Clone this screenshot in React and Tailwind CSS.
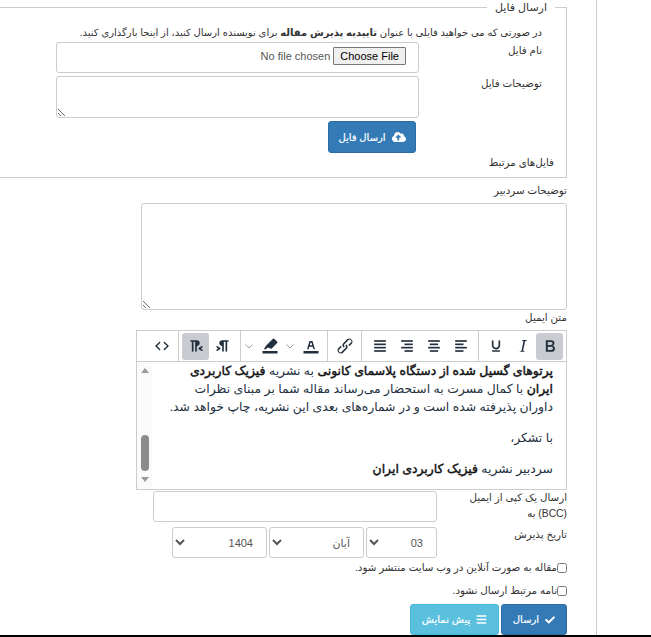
import { FaCloudUploadAlt, FaCheck, FaBars } from 'react-icons/fa';

const labelText = 'text-[10.3px] leading-[14px] text-[#333]';
const boxBorder = 'border border-[#ccc] rounded-[3px] bg-white';
const editorBold = 'font-normal [-webkit-text-stroke:0.45px_#111] text-[#111]';
const buttonText = 'text-white text-[10px] [-webkit-text-stroke:0.2px_#fff]';

function Icon({ d, flip = false, children }) {
  return (
    <svg width="20" height="20" viewBox="0 0 24 24" fill="#222f3e" className={flip ? '-scale-x-100' : ''}>
      {d && <path d={d} />}
      {children}
    </svg>
  );
}

function ToolButton({ active = false, width = 'w-[27px]', children }) {
  return (
    <div className={`${width} h-[27px] flex items-center justify-center rounded-[3px] ${active ? 'bg-[#c8cbcf]' : ''}`}>
      {children}
    </div>
  );
}

function Chevron() {
  return (
    <svg width="10" height="10" viewBox="0 0 10 10" fill="none" stroke="#9aa1a9" strokeWidth="1">
      <path d="M1.5 3.5 5 7l3.5-3.5" />
    </svg>
  );
}

function AlignIcon({ rows }) {
  return (
    <Icon>
      {rows.map(([x, y, w]) => (
        <rect key={y} x={x} y={y} width={w} height="2" />
      ))}
    </Icon>
  );
}

const pilcrow =
  'M11 5h7a1 1 0 0 1 0 2h-1v11a1 1 0 0 1-2 0V7h-2v11a1 1 0 0 1-2 0v-6c-.5 0-1 0-1.4-.3A3.4 3.4 0 0 1 7.8 10a3.3 3.3 0 0 1 0-2.8 3.4 3.4 0 0 1 1.8-1.8L11 5zM4.4 16.2L6.2 15l-1.8-1.2a1 1 0 0 1 1.2-1.6l3 2a1 1 0 0 1 0 1.6l-3 2a1 1 0 1 1-1.2-1.6z';

function Toolbar() {
  return (
    <div className="flex items-center h-[31px] border-b border-[#ccc]">
      <div className="flex h-full items-center px-[3px] border-l border-[#ccc]">
        <ToolButton active>
          <Icon d="M7.8 19c-.3 0-.5 0-.6-.2l-.2-.5V5.7c0-.2 0-.4.2-.5l.6-.2h5c1.5 0 2.7.3 3.5 1 .7.6 1.1 1.4 1.1 2.5a3 3 0 0 1-.6 1.9c-.4.6-1 1-1.6 1.2.4.1.9.3 1.3.6s.8.7 1 1.2c.4.4.5 1 .5 1.6 0 1.3-.4 2.3-1.3 3-.8.7-2.1 1-3.8 1H7.8zm5-8.3c.6 0 1.2-.1 1.6-.5.4-.3.6-.7.6-1.3 0-1.1-.8-1.7-2.3-1.7H9.3v3.5h3.4zm.5 6c.7 0 1.3-.1 1.7-.4.4-.4.6-.9.6-1.5s-.2-1-.7-1.4c-.4-.3-1-.4-2-.4H9.4v3.8h4z" />
        </ToolButton>
        <ToolButton>
          <Icon d="M16.7 4.7l-.1.9h-.3c-.6 0-1 0-1.4.3-.3.3-.4.6-.5 1.1l-2.1 9.8v.6c0 .5.4.8 1.4.8h.2l-.2.8H8l.2-.8h.2c1.1 0 1.8-.5 2-1.5l2-9.8.1-.5c0-.6-.4-.8-1.4-.8h-.3l.2-.9h5.8z" />
        </ToolButton>
        <ToolButton>
          <Icon d="M16 5c.6 0 1 .4 1 1v5.5a4 4 0 0 1-.4 1.8l-1 1.4a5.3 5.3 0 0 1-5.5 1 5 5 0 0 1-1.6-1c-.5-.4-.8-.9-1.1-1.4a4 4 0 0 1-.4-1.8V6c0-.6.4-1 1-1s1 .4 1 1v5.5c0 .3 0 .6.2 1l.6.7a3.3 3.3 0 0 0 2.2.8 3.4 3.4 0 0 0 2.2-.8c.3-.2.4-.5.6-.8l.2-.9V6c0-.6.4-1 1-1zM8 17h8c.6 0 1 .4 1 1s-.4 1-1 1H8a1 1 0 0 1 0-2z" />
        </ToolButton>
      </div>
      <div className="flex h-full items-center px-1 border-l border-[#ccc]">
        <ToolButton>
          <AlignIcon rows={[[5, 5, 14], [5, 9, 10], [5, 13, 14], [5, 17, 10]]} />
        </ToolButton>
        <ToolButton>
          <AlignIcon rows={[[5, 5, 14], [7, 9, 10], [5, 13, 14], [7, 17, 10]]} />
        </ToolButton>
        <ToolButton>
          <AlignIcon rows={[[5, 5, 14], [9, 9, 10], [5, 13, 14], [9, 17, 10]]} />
        </ToolButton>
        <ToolButton>
          <AlignIcon rows={[[5, 5, 14], [5, 9, 14], [5, 13, 14], [5, 17, 14]]} />
        </ToolButton>
      </div>
      <div className="flex h-full items-center px-[3px] border-l border-[#ccc]">
        <ToolButton>
          <Icon d="M6.2 12.3a1 1 0 0 1 1.4 1.4l-2.1 2a2 2 0 1 0 2.7 2.8l4.8-4.8a1 1 0 0 0 0-1.4 1 1 0 1 1 1.4-1.3 2.9 2.9 0 0 1 0 4L9.6 20a3.9 3.9 0 0 1-5.5-5.5l2-2zm11.6-.6a1 1 0 0 1-1.4-1.4l2-2a2 2 0 1 0-2.6-2.8L11 10.3a1 1 0 0 0 0 1.4A1 1 0 1 1 9.6 13a2.9 2.9 0 0 1 0-4L14.4 4a3.9 3.9 0 0 1 5.5 5.5l-2 2z" />
        </ToolButton>
      </div>
      <div className="flex h-full items-center pr-[3px] pl-px border-l border-[#ccc]">
        <ToolButton>
          <Icon d="M3 18h18v3H3zM8.7 16h-.8a.5.5 0 0 1-.5-.6l2.7-9c.1-.3.3-.4.5-.4h2.8c.2 0 .4.1.5.4l2.7 9a.5.5 0 0 1-.5.6h-.8a.5.5 0 0 1-.4-.4l-.7-2.2c0-.3-.3-.4-.5-.4h-3.4c-.2 0-.4.1-.5.4l-.7 2.2c0 .3-.2.4-.4.4zm2.6-7.6l-.6 2a.5.5 0 0 0 .5.6h1.6a.5.5 0 0 0 .5-.6l-.6-2c0-.3-.3-.4-.5-.4h-.4c-.2 0-.4.1-.5.4z" />
        </ToolButton>
        <ToolButton width="w-[14px]">
          <Chevron />
        </ToolButton>
        <ToolButton>
          <Icon d="M3 18h18v3H3zM17 3.4l3.6 3.6a1 1 0 0 1 0 1.4l-6.8 6.8-5-1.4-1.4 2.2H4.6l2.8-4.6 8.2-8a1 1 0 0 1 1.4 0z" />
        </ToolButton>
        <ToolButton width="w-[14px]">
          <Chevron />
        </ToolButton>
      </div>
      <div className="flex h-full items-center pr-1 pl-[3px] border-l border-[#ccc]">
        <ToolButton>
          <Icon d={pilcrow} />
        </ToolButton>
        <ToolButton active>
          <Icon d={pilcrow} flip />
        </ToolButton>
      </div>
      <div className="flex h-full items-center pr-[3px]">
        <ToolButton>
          <Icon d="M9.8 15.7c.3.3.3.8 0 1-.3.4-.9.4-1.2 0l-4.4-4.1a.8.8 0 0 1 0-1.2l4.4-4.2c.3-.3.9-.3 1.2 0 .3.3.3.8 0 1.1L6 12l3.8 3.7zm4.4 0L18 12l-3.8-3.7a.8.8 0 0 1 0-1.1c.3-.3.9-.3 1.2 0l4.4 4.2c.3.3.3.9 0 1.2l-4.4 4.1c-.3.4-.9.4-1.2 0a.7.7 0 0 1 0-1z" />
        </ToolButton>
      </div>
    </div>
  );
}

function EditorBody() {
  return (
    <div className="flex h-[127px] overflow-hidden">
      <div className="flex-1 min-w-0 pr-[13px] text-[12.4px] leading-[18px] text-[#222f3e] whitespace-nowrap">
        <p>
          <b className={editorBold}>پرتوهای گسیل شده از دستگاه پلاسمای کانونی</b> به نشریه{' '}
          <b className={editorBold}>فیزیک کاربردی</b>
        </p>
        <p>
          <b className={editorBold}>ایران</b> با کمال مسرت به استحضار می‌رساند مقاله شما بر مبنای نظرات
        </p>
        <p>داوران پذیرفته شده است و در شماره‌های بعدی این نشریه، چاپ خواهد شد.</p>
        <p className="mt-[13px]">با تشکر،</p>
        <p className="mt-[13px]">
          سردبیر نشریه <b className={editorBold}>فیزیک کاربردی ایران</b>
        </p>
      </div>
      <div className="w-[15px] flex flex-col items-center bg-[#fafafa] pt-[6px] pb-[7px]">
        <div className="w-0 h-0 border-x-[4px] border-x-transparent border-b-[5px] border-b-[#9a9a9a]" />
        <div className="flex-1" />
        <div className="w-[8px] h-[36px] rounded-full bg-[#8c8c8c]" />
        <div className="w-0 h-0 mt-[6px] border-x-[4px] border-x-transparent border-t-[5px] border-t-[#9a9a9a]" />
      </div>
    </div>
  );
}

function DateSelect({ width, value }) {
  return (
    <select
      defaultValue={value}
      className={`${width} h-[31px] pr-[9px] text-[11px] text-[#555] ${boxBorder}`}
    >
      <option>{value}</option>
    </select>
  );
}

export default function App() {
  return (
    <div className="w-[651px] h-[637px] overflow-hidden bg-white border-b-2 border-black font-['Liberation_Sans','DejaVu_Sans',sans-serif]">
      <div dir="rtl" className="w-[597px] h-full border-r border-[#ccc] pr-[29px]">
        {/* upload file panel */}
        <fieldset className="w-[575px] h-[178px] border border-[#ccc] pr-6">
          <legend className="-mr-[13px] px-2 text-[11px] leading-[14px] text-[#333]">ارسال فایل</legend>
          <p className="mt-[12px] whitespace-nowrap text-[10px] leading-[14px] text-[#333]">
            در صورتی که می خواهید فایلی با عنوان <b>تاییدیه پذیرش مقاله</b> برای نویسنده ارسال کنید، از اینجا بارگذاری کنید.
          </p>
          <div className="flex mt-[2px]">
            <label className={`w-[123px] pt-[2px] ${labelText}`}>نام فایل</label>
            <div className={`w-[363px] h-[31px] px-3 pb-[3px] flex items-center ${boxBorder}`}>
              <input
                type="file"
                className="w-full text-[11px] text-[#555] font-['Liberation_Sans',sans-serif] file:text-[11px] file:text-black file:bg-[#efefef] file:border file:border-[#767676] file:rounded-[1px] file:px-[6px] file:py-0 file:me-[3px]"
              />
            </div>
          </div>
          <div className="flex mt-[3px]">
            <label className={`w-[123px] pt-px ${labelText}`}>توضیحات فایل</label>
            <textarea className={`w-[363px] h-[42px] ${boxBorder}`} />
          </div>
          <button className={`mt-[3px] mr-[126px] w-[88px] h-[32px] flex items-center justify-center gap-[6px] rounded-[3px] bg-[#337ab7] border border-[#2e6da4] ${buttonText}`}>
            <FaCloudUploadAlt className="text-[14px]" />
            ارسال فایل
          </button>
          <div className={`mt-[3px] -mr-[12px] ${labelText}`}>فایل‌های مرتبط</div>
        </fieldset>

        <div className={`mt-[6px] ${labelText}`}>توضیحات سردبیر</div>
        <textarea className={`block mt-[5px] w-[426px] h-[107px] ${boxBorder}`} />
        <div className={`mt-[1px] ${labelText}`}>متن ایمیل</div>

        {/* mail editor */}
        <div className="mt-[5px] w-[431px] h-[160px] border border-[#ccc]">
          <Toolbar />
          <EditorBody />
        </div>

        <div className="flex h-[31px] mt-px">
          <label className="w-[130px] pl-[30px] -mt-px text-[10.3px] leading-[16px] text-[#333]">ارسال یک کپی از ایمیل (BCC) به</label>
          <input type="text" className={`w-[284px] h-[31px] ${boxBorder}`} />
        </div>
        <div className="flex mt-[5px]">
          <label className={`w-[130px] pt-px ${labelText}`}>تاریخ پذیرش</label>
          <div className="flex gap-[2px]">
            <DateSelect width="w-[71px]" value="03" />
            <DateSelect width="w-[95px]" value="آبان" />
            <DateSelect width="w-[95px]" value="1404" />
          </div>
        </div>

        <label className={`flex items-center mt-[3px] ${labelText}`}>
          <input type="checkbox" className="w-[10px] h-[10px]" />
          مقاله به صورت آنلاین در وب سایت منتشر شود.
        </label>
        <label className={`flex items-center mt-[9px] ${labelText}`}>
          <input type="checkbox" className="w-[10px] h-[10px]" />
          نامه مرتبط ارسال نشود.
        </label>

        <div className="flex gap-[2px] mt-[6px]">
          <button className={`w-[66px] h-[31px] flex items-center justify-center gap-[6px] rounded-[3px] bg-[#337ab7] border border-[#2e6da4] ${buttonText}`}>
            <FaCheck className="text-[10px]" />
            ارسال
          </button>
          <button className={`w-[89px] h-[31px] flex items-center justify-center gap-[6px] rounded-[3px] bg-[#5bc0de] border border-[#46b8da] ${buttonText}`}>
            <FaBars className="text-[11px]" />
            پیش نمایش
          </button>
        </div>
      </div>
    </div>
  );
}
